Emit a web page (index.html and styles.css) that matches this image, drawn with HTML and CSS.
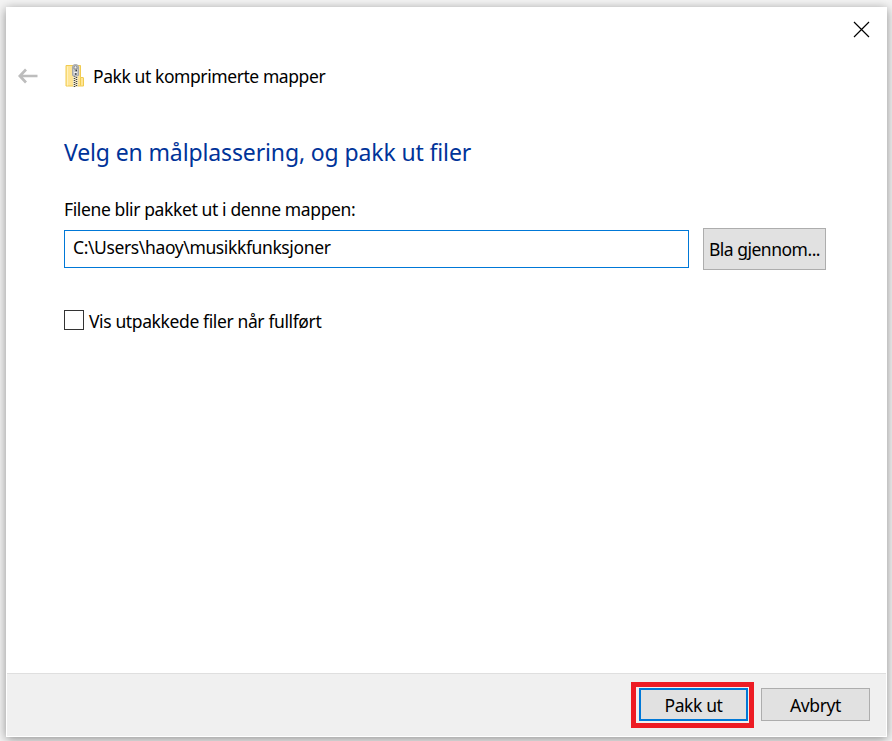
FILE: index.html
```html
<!DOCTYPE html>
<html lang="nb">
<head>
<meta charset="utf-8">
<title>Pakk ut komprimerte mapper</title>
<link rel="stylesheet" href="styles.css">
</head>
<body>
<main class="dialog">
  <div class="titlebar">
    <svg class="close" width="17" height="17" viewBox="0 0 17 17"><path d="M1 1L16 16M16 1L1 16"/></svg>
  </div>
  <header class="header">
    <svg class="back" width="20" height="16" viewBox="0 0 20 16"><path d="M19.500 8H2M8 1.500L1.800 8l6.200 6.500"/></svg>
    <svg class="folder" width="20" height="26" viewBox="0 0 20 26">
      <path d="M1 2.500h14.500v12H18q.5 0 .5.500v8H1z" fill="#ffe594" stroke="#f0cb50"/>
      <path d="M2.500 3.500v19" stroke="#fff1bd"/>
      <path d="M15.500 14.500v8" stroke="#f0cb50"/>
      <path d="M8 12h5v12H8z" fill="#f4edcf"/>
      <path d="M9.500 13v11" stroke="#45433f" stroke-width="1.500" stroke-dasharray="1 1"/>
      <path d="M11.500 14v10" stroke="#45433f" stroke-width="1.500" stroke-dasharray="1 1"/>
      <path d="M7.500 12.500V4q0-2.500 3-2.500t3 2.500v8.500q-3 1.500-6 0z" fill="#c6c8ca" stroke="#a5a8ab"/>
      <path d="M9 6V3.500q1.500-1.500 3 0V6z" fill="#eee" stroke="#85888c"/>
      <path d="M9 9.500h3" stroke="#eee"/><path d="M10.500 7.500h1.500M10 11h1.500" stroke="#34383c" stroke-width="1.500"/>
    </svg>
    <span class="text title">Pakk ut komprimerte mapper</span>
  </header>
  <section class="content">
    <h1 class="text heading">Velg en målplassering, og pakk ut filer</h1>
    <div class="text label">Filene blir pakket ut i denne mappen:</div>
    <div class="row">
      <div class="field"><span class="text path">C:\Users\haoy\musikkfunksjoner</span></div>
      <div class="button browse"><span class="text">Bla gjennom...</span></div>
    </div>
    <div class="check"><span class="box"></span><span class="text checktext">Vis utpakkede filer når fullført</span></div>
  </section>
  <footer class="footer">
    <div class="highlight"><div class="button primary"><span class="text">Pakk ut</span></div></div>
    <div class="button cancel"><span class="text">Avbryt</span></div>
  </footer>
</main>
</body>
</html>
```
FILE: styles.css
```css
* { box-sizing: border-box; }
body {
  margin: 0;
  height: 741px;
  padding: 7px 5px 4px 6px;
  overflow: hidden;
  background: #f4f4f4;
  font-family: "Noto Sans", sans-serif;
  font-size: 17.5px;
  color: #000;
}
.dialog {
  height: 730px;
  padding: 1px;
  background: #fff;
  display: flex;
  flex-direction: column;
  box-shadow: 0 2px 10px rgba(0,0,0,.42);
}
.text { white-space: nowrap; line-height: 24px; letter-spacing: -.38px; }
.titlebar { height: 50px; display: flex; justify-content: flex-end; padding: 13px 16px 0 0; }
.close path { stroke: #000; stroke-width: 1.2; fill: none; }
.header { height: 36px; display: flex; align-items: center; padding-left: 11px; }
.back { margin-top: -1px; }
.back path { stroke: #bdbdbd; stroke-width: 2.7; fill: none; }
.folder { margin: -1px 0 0 27px; }
.title { margin-left: 8px; letter-spacing: -.42px; }
.content { flex: 1; padding: 41px 60px 0 57px; }
.heading { margin: 0; font-size: 23px; line-height: 34px; font-weight: 400; color: #003399; letter-spacing: -.13px; }
.label { margin-top: 28px; }
.row { display: flex; gap: 14px; margin-top: 7px; }
.field { width: 625px; height: 38px; margin-top: 2px; border: 1px solid #0078d7; padding: 4px 8px; }
.button { border: 1px solid #adadad; background: #e1e1e1; display: flex; align-items: center; justify-content: center; }
.browse { width: 123px; height: 42px; }
.browse .text { letter-spacing: -.5px; }
.check { display: flex; align-items: center; gap: 5px; margin-top: 39px; }
.box { width: 20px; height: 20px; border: 1px solid #333; margin-top: -2px; }
.footer { height: 63px; border-top: 1px solid #dfdfdf; background: #f0f0f0; display: flex; justify-content: flex-end; gap: 7px; padding: 8px 16px 0 0; }
.highlight { width: 123px; height: 46px; border: 5px solid #ed1c24; padding: 1px 1px 2px 3px; }
.primary { width: 109px; height: 33px; border: 2px solid #0078d7; }
.cancel { width: 109px; height: 33px; margin-top: 6px; }
```
